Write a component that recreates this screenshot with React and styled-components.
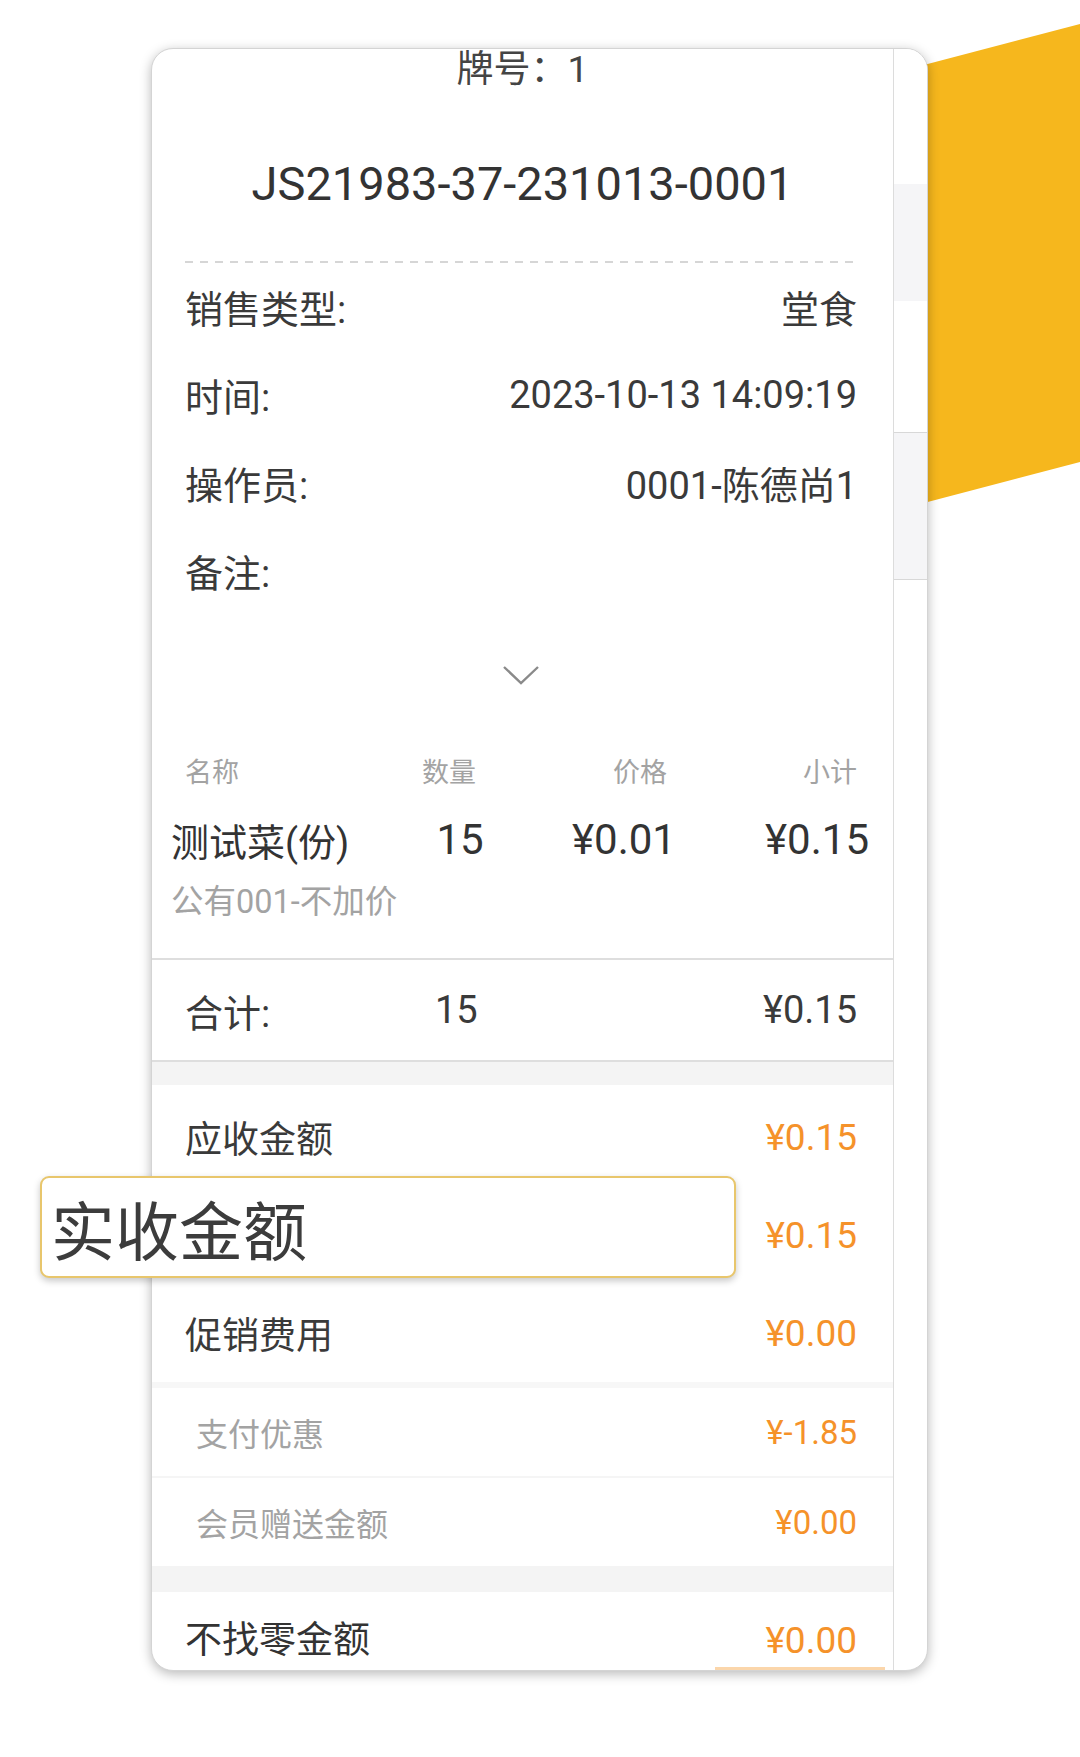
import React from 'react';
import styled, { createGlobalStyle } from 'styled-components';

const GlobalStyle = createGlobalStyle`
  html, body {
    margin: 0;
    padding: 0;
    background: #ffffff;
  }
  body {
    font-family: Roboto, "Noto Sans CJK SC", sans-serif;
  }
`;

const infoRows = [
  { label: '销售类型:', value: '堂食' },
  { label: '时间:', value: '2023-10-13 14:09:19' },
  { label: '操作员:', value: '0001-陈德尚1' },
  { label: '备注:', value: '' },
];

// the second row's label sits under the magnified callout
const summaryRows = [
  { label: '应收金额', value: '¥0.15' },
  { label: '实收金额', value: '¥0.15', covered: true },
  { label: '促销费用', value: '¥0.00' },
];

const App = () => {
  return (
    <Page>
      <GlobalStyle />
      <Ribbon viewBox="0 0 160 520" width="160" height="520">
        <polygon points="0,66 160,24 160,462 0,504" fill="#F6B71D" />
      </Ribbon>

      <Card>
        <Receipt>
          <Plate>牌号：1</Plate>
          <OrderNo>JS21983-37-231013-0001</OrderNo>
          <Dashed />

          {infoRows.map((row) => (
            <InfoRow key={row.label}>
              <span>{row.label}</span>
              <span>{row.value}</span>
            </InfoRow>
          ))}

          <ChevronBox>
            <svg width="38" height="20" viewBox="0 0 38 20">
              <polyline points="2,2 19,18 36,2" fill="none" stroke="#8a8a8a" strokeWidth="2.4" />
            </svg>
          </ChevronBox>

          <ItemGrid $head>
            <HeadCell>名称</HeadCell>
            <HeadCell $align="center">数量</HeadCell>
            <HeadCell $align="center">价格</HeadCell>
            <HeadCell $align="right">小计</HeadCell>
          </ItemGrid>
          <ItemGrid>
            <ItemName>测试菜(份)</ItemName>
            <ItemNum $align="center">15</ItemNum>
            <ItemNum $align="center">¥0.01</ItemNum>
            <ItemNum $align="right">¥0.15</ItemNum>
          </ItemGrid>
          <ItemNote>公有001-不加价</ItemNote>

          <TotalRow>
            <span>合计:</span>
            <span>15</span>
            <span>¥0.15</span>
          </TotalRow>
          <Band $h={23} />

          <SummaryList>
            {summaryRows.map((row) => (
              <SummaryRow key={row.label}>
                <RowLabel $covered={row.covered}>{row.label}</RowLabel>
                <Money>{row.value}</Money>
              </SummaryRow>
            ))}
          </SummaryList>
          <Band $h={6} $color="#f7f7f7" />

          <SubRow>
            <span>支付优惠</span>
            <Money>¥-1.85</Money>
          </SubRow>
          <Band $h={2} $color="#f5f5f5" />
          <SubRow>
            <span>会员赠送金额</span>
            <Money>¥0.00</Money>
          </SubRow>
          <Band $h={26} />

          <LastRow>
            <span>不找零金额</span>
            <Money>¥0.00</Money>
          </LastRow>
          <BottomHint />
        </Receipt>

        <Strip>
          <StripBlock $h={135} />
          <StripBlock $h={117} $gray />
          <StripBlock $h={131} />
          <StripBlock $h={146} $gray $line />
          <StripBlock $h={200} $line />
        </Strip>
      </Card>

      <Callout>实收金额</Callout>
    </Page>
  );
};

export default App;

const Page = styled.div`
  position: relative;
  width: 1080px;
  height: 1757px;
  padding: 48px 0 0 151px;
  box-sizing: border-box;
  background: #ffffff;
  overflow: hidden;
`;

const Ribbon = styled.svg`
  position: absolute;
  top: 0;
  right: 0;
  z-index: 0;
`;

const Card = styled.div`
  position: relative;
  z-index: 1;
  width: 777px;
  height: 1623px;
  display: flex;
  flex-direction: row;
  box-sizing: border-box;
  border: 1px solid #d4d4d4;
  border-radius: 22px;
  overflow: hidden;
  background: #ffffff;
  box-shadow: 0 3px 12px rgba(0, 0, 0, 0.28);
`;

const Receipt = styled.div`
  width: 741px;
  flex-shrink: 0;
  display: flex;
  flex-direction: column;
  border-right: 1px solid #dcdcdc;
  color: #3a3a3a;
`;

const Plate = styled.div`
  height: 42px;
  line-height: 42px;
  font-size: 37px;
  text-align: center;
  color: #444;
`;

const OrderNo = styled.div`
  margin-top: 63px;
  height: 60px;
  line-height: 60px;
  font-size: 47px;
  text-align: center;
  color: #333;
`;

const Dashed = styled.div`
  margin: 47px 33px 0 33px;
  height: 2px;
  background-image: linear-gradient(to right, #d6d6d6 55%, transparent 55%);
  background-size: 15px 2px;
`;

const InfoRow = styled.div`
  height: 88px;
  padding: 0 36px 0 33px;
  display: flex;
  justify-content: space-between;
  align-items: center;
  font-size: 38px;
  color: #3a3a3a;
  &:first-of-type {
    margin-top: 2px;
  }
`;

const ChevronBox = styled.div`
  height: 114px;
  padding-top: 6px;
  box-sizing: border-box;
  display: flex;
  align-items: center;
  justify-content: center;
  padding-right: 4px;
`;

const ItemGrid = styled.div`
  display: grid;
  align-items: center;
  grid-template-columns: ${(p) => (p.$head ? '195px 138px 244px 1fr' : '229px 120px 208px 1fr')};
  padding: ${(p) => (p.$head ? '0 36px 0 33px' : '0 24px 0 19px')};
  height: ${(p) => (p.$head ? '84px' : '48px')};
`;

const HeadCell = styled.div`
  font-size: 27px;
  color: #a3a3a3;
  text-align: ${(p) => p.$align || 'left'};
`;

const ItemName = styled.div`
  font-size: 38px;
  color: #333;
  white-space: nowrap;
`;

const ItemNum = styled.div`
  font-size: 42px;
  color: #333;
  text-align: ${(p) => p.$align || 'left'};
`;

const ItemNote = styled.div`
  margin-top: 22px;
  padding: 0 0 36px 19px;
  line-height: 40px;
  font-size: 32.5px;
  color: #a3a3a3;
`;

const TotalRow = styled.div`
  height: 100px;
  padding: 0 36px 0 33px;
  display: grid;
  grid-template-columns: 250px 1fr auto;
  align-items: center;
  border-top: 2px solid #dedede;
  border-bottom: 2px solid #dedede;
  font-size: 38px;
  color: #3a3a3a;
`;

const Band = styled.div`
  height: ${(p) => p.$h}px;
  background: ${(p) => p.$color || '#f4f4f4'};
  flex-shrink: 0;
`;

const SummaryList = styled.div`
  padding-top: 3px;
  display: flex;
  flex-direction: column;
`;

const SummaryRow = styled.div`
  height: 98px;
  padding: 0 36px 0 33px;
  display: flex;
  justify-content: space-between;
  align-items: center;
  font-size: 37px;
  color: #3a3a3a;
`;

const RowLabel = styled.span`
  visibility: ${(p) => (p.$covered ? 'hidden' : 'visible')};
`;

const Money = styled.span`
  color: #f5922a;
`;

const SubRow = styled.div`
  height: 88px;
  padding: 0 36px 0 44px;
  display: flex;
  justify-content: space-between;
  align-items: center;
  font-size: 32px;
  color: #a3a3a3;

  ${Money} {
    font-size: 33px;
  }
`;

const LastRow = styled.div`
  height: 75px;
  padding: 29px 36px 0 33px;
  box-sizing: border-box;
  display: flex;
  justify-content: space-between;
  align-items: flex-start;
  line-height: 40px;
  font-size: 37px;
  color: #333;
  flex-shrink: 0;
`;

const BottomHint = styled.div`
  align-self: flex-end;
  margin-right: 8px;
  width: 170px;
  height: 3px;
  background: #fbd6ab;
  flex-shrink: 0;
`;

const Strip = styled.div`
  flex: 1;
  display: flex;
  flex-direction: column;
`;

const StripBlock = styled.div`
  height: ${(p) => p.$h}px;
  background: ${(p) => (p.$gray ? '#f5f5f7' : '#ffffff')};
  border-top: ${(p) => (p.$line ? '1px solid #d8d8d8' : 'none')};
  flex-shrink: 0;
`;

const Callout = styled.div`
  position: absolute;
  z-index: 2;
  left: 40px;
  top: 1176px;
  width: 696px;
  height: 102px;
  box-sizing: border-box;
  padding-left: 9px;
  display: flex;
  align-items: center;
  border: 2px solid #e8c66c;
  border-radius: 9px;
  background: #ffffff;
  box-shadow: 0 3px 7px rgba(0, 0, 0, 0.22);
  font-family: "Noto Sans CJK SC", sans-serif;
  font-size: 64px;
  color: #3c3c3c;
`;
